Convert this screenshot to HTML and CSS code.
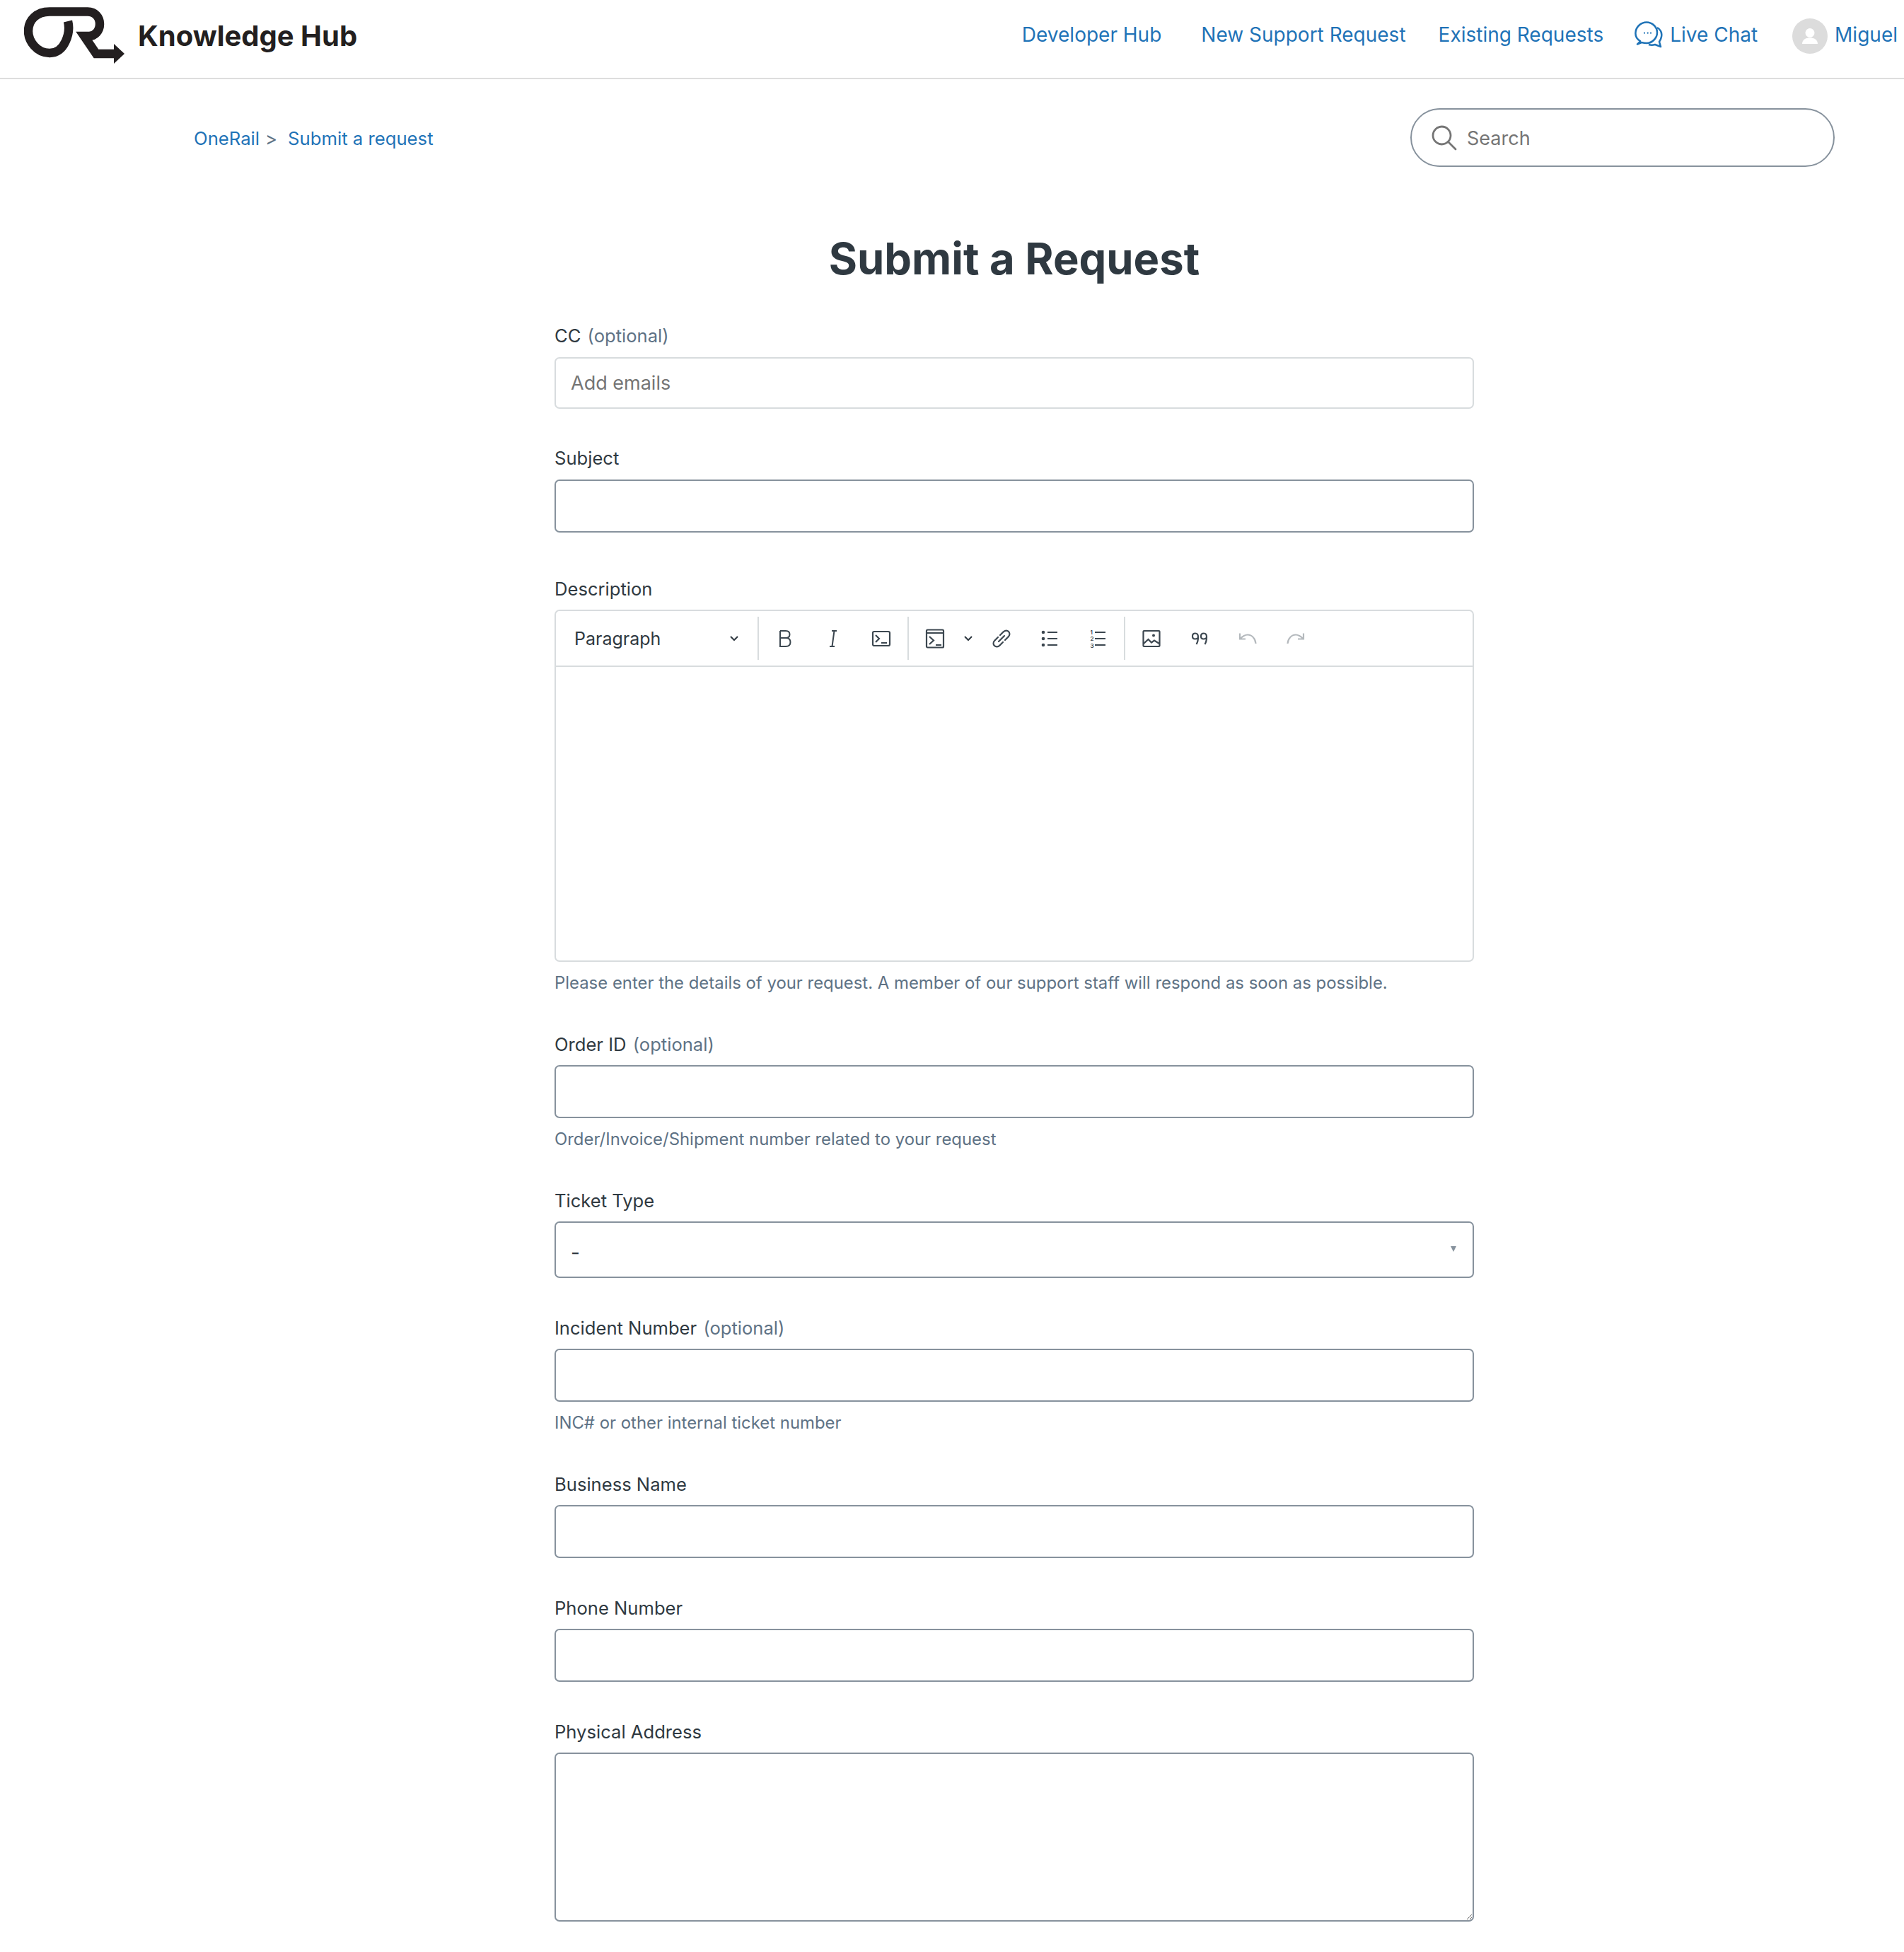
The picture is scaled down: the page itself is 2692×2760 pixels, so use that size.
FILE: index.html
```html
<!DOCTYPE html>
<html lang="en">
<head>
    <meta charset="UTF-8">
    <title>Submit a request - OneRail Knowledge Hub</title>
    <link rel="stylesheet" href="styles.css">
</head>
<body>
    <header class="topbar">
        <a class="brand" href="#">
            <svg class="brand-logo" viewBox="0 0 142 80" width="142" height="80">
                <path d="M62 20C66 36 58 65 36 65C18 65 6 48 6 34C6 18 18 6.500 36 6.500L90 6.500C100 6.500 107 14 107 24C107 34 100 41 92 41L85 41L102 66L130 66" fill="none" stroke="#231f20" stroke-width="12.500"/>
                <polygon points="127,52 142,66 127,80" fill="#231f20"/>
            </svg>
            <span class="brand-name">Knowledge Hub</span>
        </a>
        <nav class="topnav">
            <a href="#">Developer Hub</a>
            <a href="#" class="nav-new">New Support Request</a>
            <a href="#" class="nav-existing">Existing Requests</a>
            <a href="#" class="nav-chat">
                <svg viewBox="0 0 40 38" width="40" height="38" fill="none" stroke="#1f73b7" stroke-width="2.500" stroke-linejoin="round">
                    <path d="M8 28C3 25 1 21 1.500 16C2 8 9 1.500 17 1.500C25 1.500 32 8 32 16C32 24 25 31 17 31C14 31 12 30.500 10 30L4 32.500C6 30.500 7.500 29.500 8 28Z"/>
                    <path d="M32 9C37 12 39 17 38 22C37.500 25 36.500 27 35 29L37 36L29 33C26 34 23 34 20 33"/>
                    <circle cx="14" cy="16.700" r="1.100" fill="#1f73b7" stroke="none"/>
                    <circle cx="18.700" cy="16.700" r="1.100" fill="#1f73b7" stroke="none"/>
                    <circle cx="23" cy="16.700" r="1.100" fill="#1f73b7" stroke="none"/>
                </svg>
                Live Chat
            </a>
            <a href="#" class="nav-user">
                <span class="avatar">
                    <svg viewBox="0 0 50 50" width="50" height="50">
                        <circle cx="25" cy="20.500" r="6.500" fill="#fff"/>
                        <path d="M14 36C14 30 19 27.500 25 27.500C31 27.500 36 30 36 36Z" fill="#fff"/>
                    </svg>
                </span>
                Miguel
            </a>
        </nav>
    </header>

    <main class="page">
        <div class="subnav">
            <ol class="breadcrumbs">
                <li><a href="#">OneRail</a><span class="crumb-sep">&gt;</span></li>
                <li><a href="#">Submit a request</a></li>
            </ol>
            <form class="search">
                <svg viewBox="0 0 36 36" width="36" height="36" fill="none" stroke="#757575" stroke-width="2.800">
                    <circle cx="14.500" cy="14.500" r="12.500"/>
                    <path d="M23.500 23.500L34 34" stroke-linecap="round"/>
                </svg>
                <input type="text" placeholder="Search">
            </form>
        </div>

        <h1>Submit a Request</h1>

        <form class="request-form">
            <div class="field">
                <label>CC <span class="optional">(optional)</span></label>
                <input class="control control-light" type="text" placeholder="Add emails">
            </div>
            <div class="field field-subject">
                <label>Subject</label>
                <input class="control" type="text">
            </div>
            <div class="field field-hinted">
                <label>Description</label>
                <div class="editor">
                    <div class="toolbar">
                        <div class="format-select">
                            <span>Paragraph</span>
                            <svg viewBox="0 0 12 8" width="12" height="8" fill="none" stroke="#2f3941" stroke-width="2"><path d="M1 1L6 6L11 1"/></svg>
                        </div>
                        <span class="divider"></span>
                        <button type="button" class="tool">
                            <svg viewBox="0 0 28 28" width="28" height="28" fill="none" stroke="#3c4750" stroke-width="2"><path d="M7 3H15C18.500 3 20.500 5 20.500 8C20.500 11 18.500 13 15 13H7M15 13C19.500 13 21.500 15.500 21.500 19C21.500 22.500 19.500 25 15 25H7V3"/></svg>
                        </button>
                        <button type="button" class="tool">
                            <svg viewBox="0 0 28 28" width="28" height="28" fill="none" stroke="#3c4750" stroke-width="2"><path d="M12 3H19M9 25H16M15.500 3L12.500 25"/></svg>
                        </button>
                        <button type="button" class="tool">
                            <svg viewBox="0 0 28 28" width="28" height="28" fill="none" stroke="#3c4750" stroke-width="2.200"><rect x="2" y="4" width="24" height="20" rx="2"/><path d="M6 9L11 14L6 19M14 20H22"/></svg>
                        </button>
                        <span class="divider"></span>
                        <button type="button" class="tool">
                            <svg viewBox="0 0 28 28" width="28" height="28" fill="none" stroke="#3c4750" stroke-width="2.200"><rect x="2" y="1.500" width="24" height="25" rx="1.500"/><path d="M2 6H26M6 11L12 16.500L6 22M15 23H23"/></svg>
                        </button>
                        <button type="button" class="tool-arrow">
                            <svg viewBox="0 0 12 8" width="12" height="8" fill="none" stroke="#2f3941" stroke-width="2"><path d="M1 1L6 6L11 1"/></svg>
                        </button>
                        <button type="button" class="tool">
                            <svg viewBox="0 0 28 28" width="28" height="28" fill="none" stroke="#3c4750" stroke-width="2.200" stroke-linecap="round"><path d="M12 9L16.500 4.500C19 2 22 2 24 4C26 6 26 9 23.500 11.500L19 16M16 19L11.500 23.500C9 26 6 26 4 24C2 22 2 19 4.500 16.500L9 12M10 18L18 10"/></svg>
                        </button>
                        <button type="button" class="tool">
                            <svg viewBox="0 0 28 28" width="28" height="28" fill="none" stroke="#3c4750" stroke-width="2.200"><circle cx="5" cy="5" r="2.300" fill="#3c4750" stroke="none"/><circle cx="5" cy="14" r="2.300" fill="#3c4750" stroke="none"/><circle cx="5" cy="23" r="2.300" fill="#3c4750" stroke="none"/><path d="M11 5H25M11 14H25M11 23H25"/></svg>
                        </button>
                        <button type="button" class="tool">
                            <svg viewBox="0 0 28 28" width="28" height="28" fill="none" stroke="#3c4750" stroke-width="2.200"><text class="tool-num" x="3.500" y="8">1</text><text class="tool-num" x="3.500" y="17">2</text><text class="tool-num" x="3.500" y="26.500">3</text><path d="M10 5H25M10 14H25M10 23H25"/></svg>
                        </button>
                        <span class="divider"></span>
                        <button type="button" class="tool">
                            <svg viewBox="0 0 28 28" width="28" height="28" fill="none" stroke="#3c4750" stroke-width="2.200"><rect x="2.500" y="3" width="23" height="22" rx="1"/><circle cx="17" cy="9.500" r="2" fill="#3c4750" stroke="none"/><path d="M3 21L9.500 15L14 19.500L18 16.500L25 21"/></svg>
                        </button>
                        <button type="button" class="tool">
                            <svg viewBox="0 0 28 28" width="28" height="28" fill="none" stroke="#3c4750" stroke-width="2.200"><path d="M12 11.500C12 14 10 14.500 7.500 14.500C5 14.500 4 12.500 4 10.500C4 8 5.500 6.500 8 6.500C10.500 6.500 12 8.500 12 11.500C12 15 11.500 19 9.500 22"/><path d="M24 11.500C24 14 22 14.500 19.500 14.500C17 14.500 16 12.500 16 10.500C16 8 17.500 6.500 20 6.500C22.500 6.500 24 8.500 24 11.500C24 15 23.500 19 21.500 22"/></svg>
                        </button>
                        <button type="button" class="tool">
                            <svg viewBox="0 0 28 28" width="28" height="28" fill="none" stroke="#b4b9bd" stroke-width="2.200"><path d="M25.500 21C25 14 20 8.500 14 8.500C10 8.500 7 10.500 3 14.500M3 6.500V14.500H11"/></svg>
                        </button>
                        <button type="button" class="tool">
                            <svg viewBox="0 0 28 28" width="28" height="28" fill="none" stroke="#b4b9bd" stroke-width="2.200"><path d="M2.500 21C3 14 8 8.500 14 8.500C18 8.500 21 10.500 25 14.500M25 6.500V14.500H17"/></svg>
                        </button>
                    </div>
                    <div class="editor-body"></div>
                </div>
                <p class="hint">Please enter the details of your request. A member of our support staff will respond as soon as possible.</p>
            </div>
            <div class="field field-hinted">
                <label>Order ID <span class="optional">(optional)</span></label>
                <input class="control" type="text">
                <p class="hint">Order/Invoice/Shipment number related to your request</p>
            </div>
            <div class="field">
                <label>Ticket Type</label>
                <div class="select-box"><span>-</span></div>
            </div>
            <div class="field field-hinted">
                <label>Incident Number <span class="optional">(optional)</span></label>
                <input class="control" type="text">
                <p class="hint">INC# or other internal ticket number</p>
            </div>
            <div class="field">
                <label>Business Name</label>
                <input class="control" type="text">
            </div>
            <div class="field">
                <label>Phone Number</label>
                <input class="control" type="text">
            </div>
            <div class="field">
                <label>Physical Address</label>
                <textarea class="control control-area"></textarea>
            </div>
        </form>
    </main>
</body>
</html>
```

FILE: styles.css
```css
* {
    box-sizing: border-box;
}
body {
    margin: 0;
    background-color: #fff;
    color: #2f3941;
    font-family: 'Inter', sans-serif;
    font-size: 25.6px;
}
a {
    color: #1f73b7;
    text-decoration: none;
}
.topbar {
    display: flex;
    justify-content: space-between;
    align-items: center;
    height: 112px;
    padding: 0 9px 10px 34px;
    border-bottom: 2px solid #ddd;
}
.brand {
    display: flex;
    align-items: center;
    gap: 19px;
    color: #231f20;
}
.brand-logo {
    display: block;
}
.brand-name {
    font-size: 40px;
    font-weight: 700;
}
.topnav {
    display: flex;
    align-items: center;
    font-size: 28px;
    padding-bottom: 3px;
}
.nav-new {
    margin-left: 56px;
}
.nav-existing {
    margin-left: 46px;
}
.nav-chat {
    display: flex;
    align-items: center;
    gap: 10px;
    margin-left: 44px;
}
.nav-user {
    display: flex;
    align-items: center;
    gap: 10px;
    margin-left: 49px;
}
.avatar {
    display: block;
    width: 50px;
    height: 50px;
    margin-top: 5px;
    border-radius: 50%;
    background-color: #dcdcdc;
}
.page {
    margin-left: 274px;
    width: 2320px;
}
.subnav {
    display: flex;
    justify-content: space-between;
    align-items: center;
    padding-top: 41px;
}
.breadcrumbs {
    display: flex;
    margin: 0;
    padding: 2px 0 0;
    list-style: none;
    font-size: 25.7px;
}
.crumb-sep {
    color: #5e7285;
    margin: 0 15px 0 8px;
}
.search {
    display: flex;
    align-items: center;
    gap: 14px;
    width: 600px;
    height: 83px;
    padding-left: 28px;
    border: 2px solid #87929d;
    border-radius: 42px;
}
.search input {
    flex: 1;
    min-width: 0;
    margin-right: 30px;
    padding: 2px 0 0;
    border: none;
    outline: none;
    background: none;
    font-family: inherit;
    font-size: 27px;
    color: #2f3941;
}
.search input::placeholder {
    color: #757575;
}
h1 {
    margin: 90px 0 54px;
    font-size: 61.5px;
    line-height: 80px;
    font-weight: 700;
    text-align: center;
}
.request-form {
    width: 1300px;
    margin: 0 auto;
}
.field {
    margin-bottom: 55.5px;
}
.field-subject {
    margin-bottom: 65px;
}
.field-hinted {
    margin-bottom: 57px;
}
label {
    display: block;
    height: 30px;
    line-height: 30px;
    margin-bottom: 14.5px;
}
.optional {
    color: #5e7285;
    margin-left: 2px;
}
.control {
    display: block;
    width: 100%;
    height: 75px;
    padding: 0 21px;
    border: 2px solid #87929d;
    border-radius: 7px;
    background-color: #fff;
    font-family: inherit;
    font-size: 27px;
    color: #2f3941;
    outline: none;
}
.control-light {
    height: 73px;
    border-color: #d8dcde;
}
.control-light::placeholder {
    color: #757575;
}
.control-area {
    height: 239px;
    resize: vertical;
}
.select-box {
    position: relative;
    height: 80px;
    padding: 24px 21px 0;
    border: 2px solid #87929d;
    border-radius: 7px;
    font-size: 28px;
    line-height: 36px;
}
.select-box::after {
    content: "";
    position: absolute;
    top: 33px;
    right: 23px;
    border-left: 4px solid transparent;
    border-right: 4px solid transparent;
    border-top: 8px solid #87929d;
}
.hint {
    margin: 14.5px 0 0;
    font-size: 23.9px;
    line-height: 30px;
    color: #5e7285;
}
.editor {
    height: 498px;
    border: 2px solid #d8dcde;
    border-radius: 7px;
}
.toolbar {
    display: flex;
    align-items: center;
    height: 79px;
    border-bottom: 2px solid #d8dcde;
}
.format-select {
    display: flex;
    justify-content: space-between;
    align-items: center;
    width: 282px;
    padding: 0 24px 0 26px;
    font-size: 25px;
}
.divider {
    width: 2px;
    height: 61px;
    margin: 0 3px;
    background-color: #d8dcde;
}
.tool,
.tool-arrow {
    display: flex;
    justify-content: center;
    align-items: center;
    height: 60px;
    padding: 0;
    border: none;
    background: none;
}
.tool {
    width: 68px;
}
.tool-arrow {
    width: 26px;
}
.tool-num {
    font-family: 'Inter', sans-serif;
    font-size: 8px;
    font-weight: 600;
    fill: #3c4750;
    stroke: none;
}
```
